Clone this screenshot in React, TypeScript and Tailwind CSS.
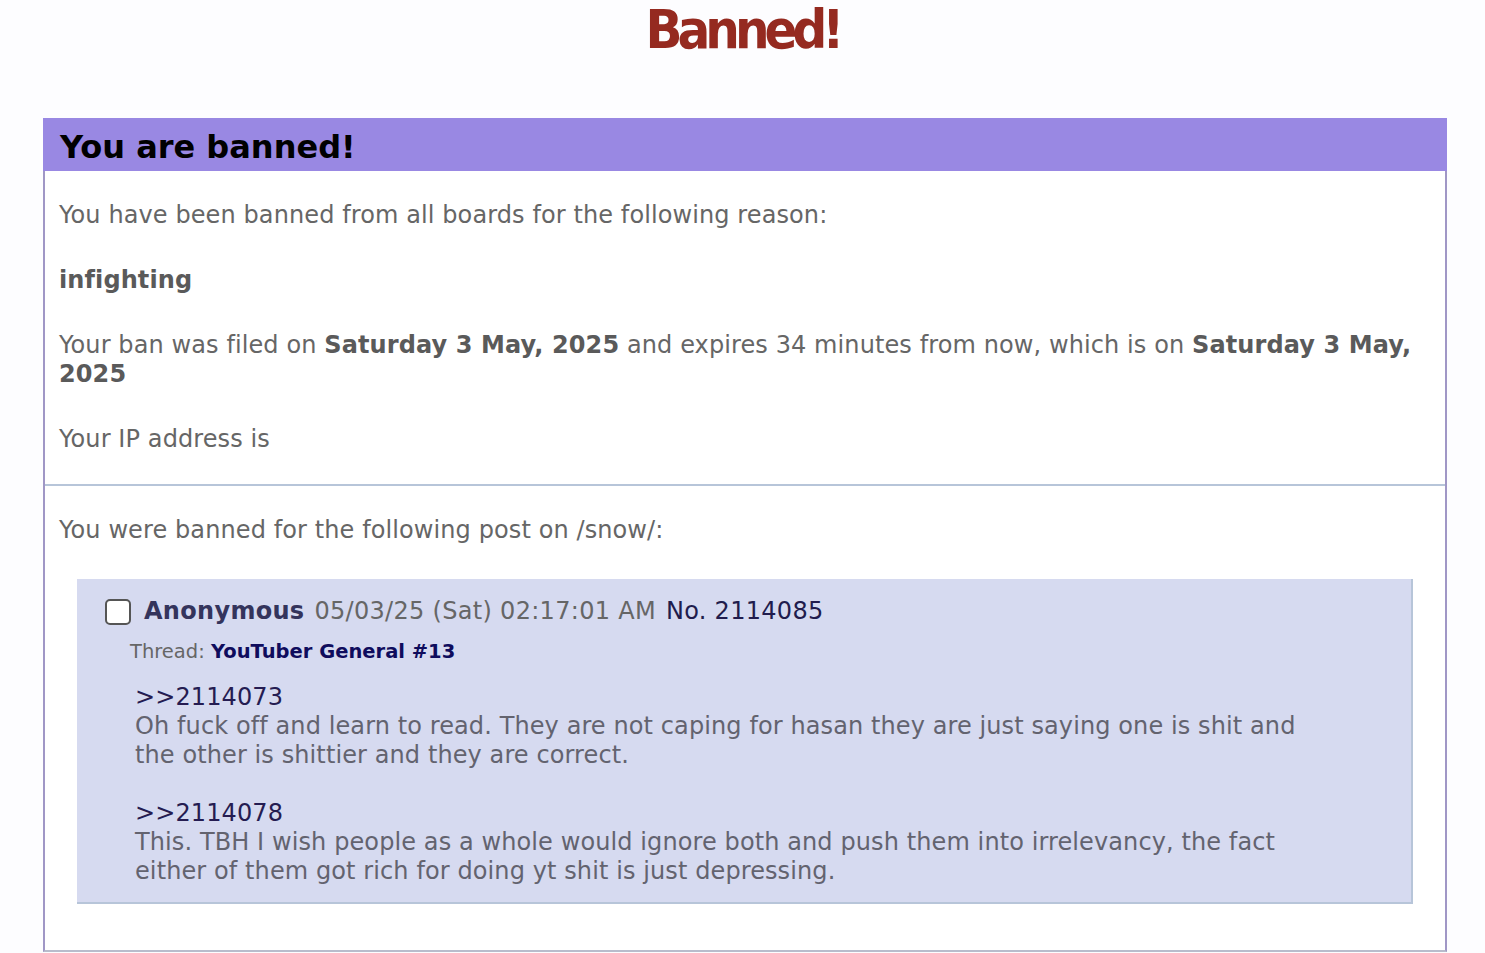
import React from "react";

export default function App() {
  return (
    <div
      className="min-h-screen bg-[#fdfdff]"
      style={{ fontFamily: "'DejaVu Sans', Verdana, sans-serif" }}
    >
      <h1 className="flex h-[118px] justify-center">
        <span className="h-[63px] font-['DejaVu_Sans_Condensed',sans-serif] text-[54px] font-bold leading-[60px] tracking-[-5px] text-[#952a20]">
          Banned!
        </span>
      </h1>

      <div className="ml-[43px] w-[1404px]">
        <div className="flex h-[53px] items-center bg-[#9988e3] pl-[17px] pt-[5px]">
          <h2 className="text-[32px] font-bold leading-[38px] text-black">You are banned!</h2>
        </div>
        <div className="border-x-2 border-b-2 border-x-[#a097c6] border-b-[#b9bccc] bg-white">
          <div className="px-[14px] pt-[30px] pb-[30px] text-[24px] leading-[29px] tracking-[0.1px] text-[#666666]">
            <p>You have been banned from all boards for the following reason:</p>
            <p className="mt-[36px] font-bold text-[#5a5a5a]">infighting</p>
            <p className="mt-[36px]">
              Your ban was filed on <b className="text-[#5a5a5a]">Saturday 3 May, 2025</b> and expires 34 minutes from
              now, which is on <b className="text-[#5a5a5a]">Saturday 3 May,</b>{" "}
              <b className="text-[#5a5a5a]">2025</b>
            </p>
            <p className="mt-[36px]">Your IP address is</p>
          </div>
          <div className="h-[2px] bg-[#b7c5d9]" />
          <div className="px-[14px] pt-[30px] text-[24px] leading-[29px] tracking-[0.1px] text-[#666666]">
            <p>You were banned for the following post on /snow/:</p>
          </div>
          <div className="mx-[32px] mt-[34px] mb-[45px] border-r-2 border-b-2 border-[#b7c5d9] bg-[#d6daf0] pt-[18px] pb-[16px]">
            <div className="flex items-center pl-[28px] text-[24px] leading-[29px] tracking-[0.3px]">
              <span className="mr-[13px] inline-block h-[26px] w-[26px] rounded-[5px] border-2 border-[#555] bg-white" />
              <span className="font-bold text-[#34345c]">Anonymous</span>
              <span className="ml-[10px] text-[#666666]">05/03/25 (Sat) 02:17:01 AM</span>
              <span className="ml-[10px] text-[#211c4d]">No. 2114085</span>
            </div>
            <div className="mt-[15px] pl-[53px] text-[19.5px] leading-[22px] text-[#666666]">
              Thread: <b className="text-[#0f0c5d]">YouTuber General #13</b>
            </div>
            <div className="mt-[20px] pl-[58px] text-[24px] leading-[29px] tracking-[0.1px] text-[#63636f] whitespace-nowrap">
              <div className="text-[#251c52]">&gt;&gt;2114073</div>
              <div>
                Oh fuck off and learn to read. They are not caping for hasan they are just saying one is shit and
              </div>
              <div>the other is shittier and they are correct.</div>
              <div className="h-[29px]" />
              <div className="text-[#251c52]">&gt;&gt;2114078</div>
              <div>
                This. TBH I wish people as a whole would ignore both and push them into irrelevancy, the fact
              </div>
              <div>either of them got rich for doing yt shit is just depressing.</div>
            </div>
          </div>
          <div className="h-[1px]" />
        </div>
      </div>
    </div>
  );
}
